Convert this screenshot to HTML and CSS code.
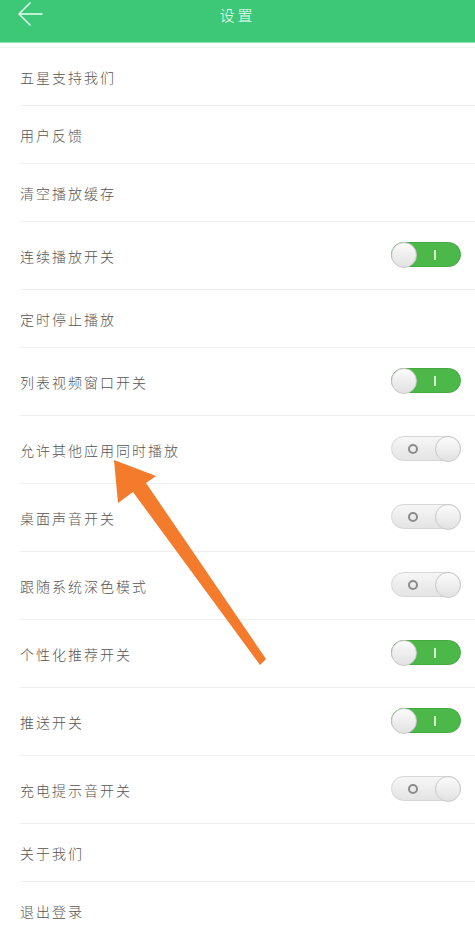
FILE: index.html
```html
<!DOCTYPE html>
<html lang="zh">

<head>
    <meta charset="UTF-8">
    <meta name="viewport" content="width=device-width, initial-scale=1.0">
    <title>设置</title>
    <link rel="stylesheet" href="styles.css">
</head>

<body>
    <div class="header">
        <div class="bar">
            <svg class="back" width="28" height="26" viewBox="0 0 28 26">
                <path d="M26 12 H4 M14 1 L3 12 L14 23" fill="none" stroke="#e8fff0" stroke-width="1.5" stroke-linecap="round" stroke-linejoin="round" />
            </svg>
            <div class="title">设置</div>
        </div>
    </div>

    <div class="list">
        <div class="row">五星支持我们</div>
        <div class="row">用户反馈</div>
        <div class="row">清空播放缓存</div>
        <div class="row tall">连续播放开关<span class="switch on"><i></i></span></div>
        <div class="row">定时停止播放</div>
        <div class="row tall">列表视频窗口开关<span class="switch on"><i></i></span></div>
        <div class="row tall">允许其他应用同时播放<span class="switch off"><i></i></span></div>
        <div class="row tall">桌面声音开关<span class="switch off"><i></i></span></div>
        <div class="row tall">跟随系统深色模式<span class="switch off"><i></i></span></div>
        <div class="row tall">个性化推荐开关<span class="switch on"><i></i></span></div>
        <div class="row tall">推送开关<span class="switch on"><i></i></span></div>
        <div class="row tall">充电提示音开关<span class="switch off"><i></i></span></div>
        <div class="row">关于我们</div>
        <div class="row">退出登录</div>
    </div>

    <!-- annotation arrow drawn over the list -->
    <svg class="arrow" width="475" height="936" viewBox="0 0 475 936">
        <polygon points="114,460 156,476 146,483 266,659 260,665 133,492 118,503" fill="#f47a2c" />
    </svg>
</body>

</html>
```

FILE: styles.css
```css
html {
    height: 100%;
}

body {
    margin: 0;
    padding: 0;
    background: #fff;
    font-family: "Noto Sans CJK SC", "Noto Sans", sans-serif;
    position: relative;
    overflow: hidden;
}

.header {
    height: 43px;
    background: #3dc878;
    border-bottom: 1px solid #8fe0b2;
    box-sizing: border-box;
}

.header .bar {
    height: 29px;
    display: flex;
    align-items: center;
    justify-content: center;
    position: relative;
}

.header .back {
    position: absolute;
    left: 16px;
    top: 2px;
}

.header .title {
    color: #f2fff6;
    font-size: 15px;
    font-weight: 300;
    letter-spacing: 3px;
}

.list {
    margin-top: 4px;
    border-top: 1px solid #f2f2f2;
}

.row {
    height: 58px;
    margin-left: 20px;
    padding-right: 14px;
    display: flex;
    align-items: center;
    justify-content: space-between;
    border-bottom: 1px solid #efefef;
    box-sizing: border-box;
    color: #555;
    font-size: 14px;
    font-weight: 300;
    letter-spacing: 2px;
}

.row.tall {
    height: 68px;
}

.switch {
    position: relative;
    width: 70px;
    height: 25px;
    border-radius: 13px;
    box-sizing: border-box;
    margin-top: -2px;
}

.switch::after {
    content: "";
    position: absolute;
    top: -1px;
    width: 26px;
    height: 26px;
    border-radius: 50%;
    box-sizing: border-box;
    background: linear-gradient(#fbfbfb, #e2e2e2);
    border: 1px solid #c9c9c9;
}

.switch.on {
    background: #4cb84a;
    border: 1px solid #44a843;
}

.switch.on::after {
    left: -1px;
}

.switch.on i {
    position: absolute;
    left: 42px;
    top: 7px;
    width: 2px;
    height: 10px;
    background: #d6f5cf;
}

.switch.off {
    background: linear-gradient(#f6f6f6, #e4e4e4);
    border: 1px solid #d6d6d6;
}

.switch.off::after {
    right: -1px;
}

.switch.off i {
    position: absolute;
    left: 16px;
    top: 7px;
    width: 10px;
    height: 10px;
    border-radius: 50%;
    border: 2px solid #8a8a8a;
    box-sizing: border-box;
}

.arrow {
    position: absolute;
    left: 0;
    top: 0;
    pointer-events: none;
}
```
